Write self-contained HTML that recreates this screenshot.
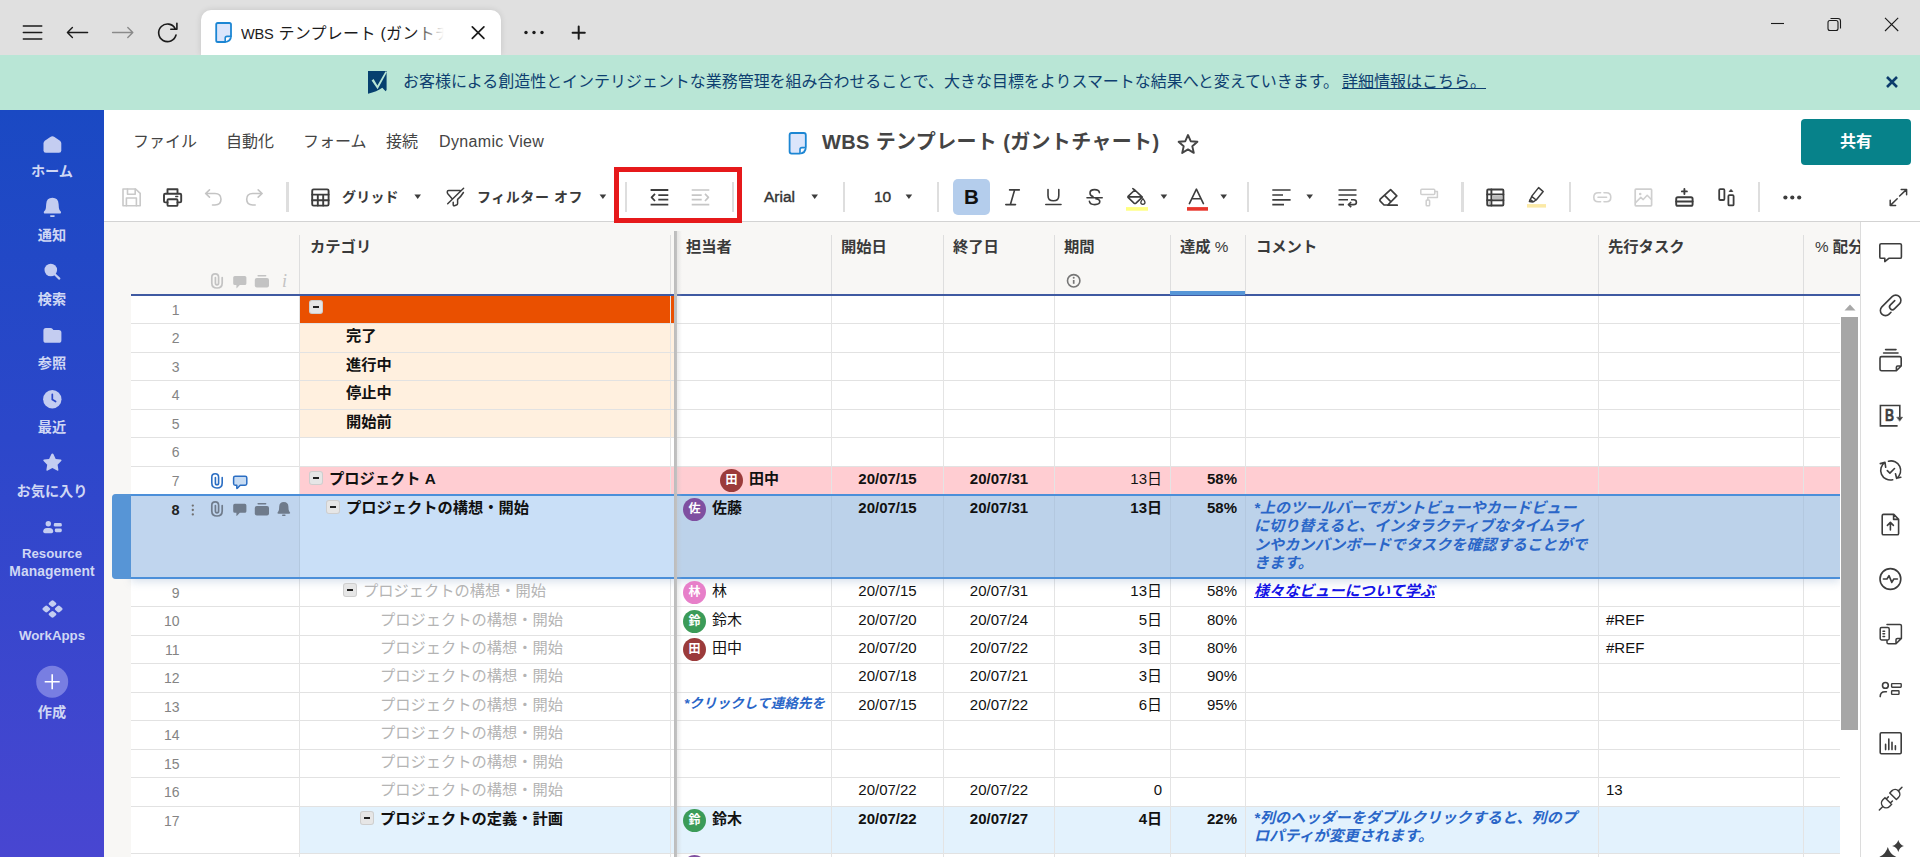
<!DOCTYPE html><html lang="ja"><head><meta charset="utf-8"><title>WBS</title><style>
*{box-sizing:border-box;margin:0;padding:0}
html,body{width:1920px;height:857px;overflow:hidden;background:#fff}
body{position:relative;font-family:"Liberation Sans","Noto Sans CJK JP",sans-serif;color:#222;font-size:14px}
.abs{position:absolute}
#chrome{left:0;top:0;width:1920px;height:55px;background:#e0e0e0}
#tab{left:201px;top:10px;width:300px;height:45px;background:#fff;border-radius:10px 10px 0 0;box-shadow:0 0 6px rgba(0,0,0,.12)}
#banner{left:0;top:55px;width:1920px;height:55px;background:#b9e6d6}
#side{left:0;top:110px;width:104px;height:747px;background:linear-gradient(180deg,#1a49c3 0%,#2c47ca 44%,#4846d1 100%)}
.sl{position:absolute;left:0;width:104px;text-align:center;color:#cfd7f4;font-weight:bold;font-size:14.2px;line-height:18px;white-space:nowrap}
.menu{position:absolute;top:132px;font-size:16px;line-height:20px;color:#444;white-space:nowrap}
.sep{position:absolute;top:182px;width:2px;height:30px;background:#dedede}
#gridbg{left:104px;top:222px;width:1756px;height:635px;background:#f8f7f5}
.hd{position:absolute;top:238px;font-size:15.3px;font-weight:bold;color:#3a3a3a;line-height:18px;white-space:nowrap}
.vl{position:absolute;width:1px;background:#e2e2e2}
.hl{position:absolute;height:1px;background:#e2e2e2;left:131px;width:1709px}
.row{position:absolute;left:300px;width:1540px}
.rn{position:absolute;left:131px;width:48.5px;text-align:right;font-size:14px;color:#848484;line-height:18px}
.c{position:absolute;font-size:15px;line-height:18px;white-space:nowrap;color:#111}
.b{font-weight:bold}
.g{color:#b4b4b4}
.r{text-align:right}
.av{position:absolute;width:23px;height:23px;border-radius:50%;color:#fff;font-size:12px;line-height:23px;text-align:center;font-weight:700}
.cm{position:absolute;font-size:15px;letter-spacing:.12px;line-height:18.35px;color:#2a66c8;font-style:italic;font-weight:bold;white-space:nowrap}
.tg{position:absolute;width:14px;height:14px;border-radius:3px;background:#e6e6e6;box-shadow:inset 0 0 0 1px rgba(0,0,0,.1)}
.tg:after{content:"";position:absolute;left:4px;top:6px;width:6px;height:2px;background:#222}
</style></head><body><div id="chrome" class="abs"></div>
<div id="tab" class="abs"></div>
<div id="banner" class="abs"></div>
<div id="side" class="abs"></div>
<div id="gridbg" class="abs"></div>
<svg class="abs" style="left:0;top:0" width="620" height="55" viewBox="0 0 620 55" fill="none" stroke="#1b1b1b" stroke-width="1.6" stroke-linecap="round" stroke-linejoin="round">
<path d="M23.3 26H41.8M23.3 32.5H41.8M23.3 39H41.8" stroke-width="1.4"/>
<path d="M67.6 32.5H87.6M72.4 27.5L67.4 32.5L72.4 37.5" stroke-width="1.4"/>
<path d="M112.6 32.5H132.6M127.8 27.5L132.8 32.5L127.8 37.5" stroke="#8a8a8a" stroke-width="1.4"/>
<path d="M176 35A8.8 8.8 0 1 1 175.2 28.6M176.9 23.2V29.3H170.8" stroke-width="1.6"/>
<path d="M472.3 26.8L483.9 38.4M483.9 26.8L472.3 38.4" stroke-width="1.7"/>
<path d="M572.6 32.7H584.8M578.7 26.6V38.8" stroke-width="2"/>
<g fill="#1b1b1b" stroke="none"><circle cx="526" cy="32.5" r="1.7"/><circle cx="534" cy="32.5" r="1.7"/><circle cx="542" cy="32.5" r="1.7"/></g>
<path d="M217.8 23H229.4Q231 23 231 24.6V35.6Q231 42 224.6 42H217.8Q216.2 42 216.2 40.4V24.6Q216.2 23 217.8 23Z" fill="#dbe5fb" stroke="#1c86d3" stroke-width="1.8"/>
<path d="M231 36.4H227Q225.2 36.4 225.2 38.2V42" fill="#fff" stroke="#1c86d3" stroke-width="1.6"/>
</svg>
<div class="abs" style="left:241px;top:22px;width:206px;height:24px;overflow:hidden;white-space:nowrap;font-size:16px;line-height:24px;color:#1b1b1b;letter-spacing:.3px"><span style="font-size:14.6px;letter-spacing:-.2px">WBS</span> テンプレート (ガントチャート)</div>
<div class="abs" style="left:415px;top:22px;width:34px;height:24px;background:linear-gradient(90deg,rgba(255,255,255,0),#fff 85%)"></div>
<svg class="abs" style="left:1760px;top:10px" width="150" height="30" viewBox="1760 10 150 30" fill="none" stroke="#1b1b1b" stroke-width="1.1">
<path d="M1771 23.5H1784"/>
<rect x="1828" y="20.5" width="10" height="10" rx="2"/><path d="M1830.5 18.5H1838Q1840.5 18.5 1840.5 21V28.5"/>
<path d="M1885 17.8L1898.2 31M1898.2 17.8L1885 31"/>
</svg>
<svg class="abs" style="left:366px;top:70px" width="24" height="26" viewBox="366 70 24 26"><path d="M368 71H386.6V90L385.6 91.2L382.3 87.8Q377 91.6 368 93.8Z" fill="#06406f"/><path d="M371.6 80.6L373.6 79L377.4 85.4L385.6 71.2L386.9 72.2L377.6 89.3Z" fill="#b9e6d6"/></svg>
<div class="abs" style="left:403px;top:70px;font-size:16px;line-height:24px;color:#0e3f70;white-space:nowrap;letter-spacing:-.04px">お客様による創造性とインテリジェントな業務管理を組み合わせることで、大きな目標をよりスマートな結果へと変えていきます。</div>
<div class="abs" style="left:1342px;top:70px;font-size:16px;line-height:24px;color:#0e3f70;white-space:nowrap;text-decoration:underline">詳細情報はこちら。</div>
<svg class="abs" style="left:1884px;top:74px" width="16" height="16" viewBox="0 0 16 16"><path d="M3 3L13 13M13 3L3 13" stroke="#0c3c6c" stroke-width="2.6" fill="none"/></svg>
<svg class="abs" style="left:0;top:110px" width="104" height="747" viewBox="0 110 104 747" fill="#c4cdf1">
<path d="M43.5 150.5V143.5Q43.5 141.8 44.8 140.8L50.3 136.9Q52.4 135.5 54.5 136.9L60 140.8Q61.3 141.8 61.3 143.5V150.5Q61.3 152.8 59 152.8H45.8Q43.5 152.8 43.5 150.5Z"/>
<path d="M52.4 197.8Q58.3 197.8 58.6 204L58.9 208Q59.2 210.3 60.8 211.6Q61.6 213.6 59.6 213.6H45.2Q43.2 213.6 44 211.6Q45.6 210.3 45.9 208L46.2 204Q46.5 197.8 52.4 197.8Z"/><rect x="50" y="215.2" width="4.8" height="1.7" rx=".8"/>
<circle cx="50.8" cy="270" r="6.3"/><path d="M54.5 274L59.3 278.6" stroke="#c4cdf1" stroke-width="2.2" stroke-linecap="round"/>
<path d="M43.4 330.5Q43.4 328 45.9 328H50.5Q51.8 328 52.6 329L53.4 330H58.8Q61.4 330 61.4 332.6V340.2Q61.4 342.8 58.8 342.8H46Q43.4 342.8 43.4 340.2Z"/>
<circle cx="52.3" cy="399.3" r="9.2"/><path d="M52.3 394.3V399.6L55.6 401.6" stroke="#2a47c9" stroke-width="1.7" fill="none" stroke-linecap="round"/>
<path d="M52.4 453.5Q53.1 453.5 53.5 454.3L55.7 458.9L60.7 459.6Q62.3 459.9 61.2 461.1L57.6 464.7L58.4 469.7Q58.6 471.3 57.1 470.6L52.4 468.1L47.7 470.6Q46.2 471.3 46.4 469.7L47.2 464.7L43.6 461.1Q42.5 459.9 44.1 459.6L49.1 458.9L51.3 454.3Q51.7 453.5 52.4 453.5Z"/>
<circle cx="48.3" cy="523.8" r="2.7"/><path d="M43.2 531.6Q43.2 527.9 47 527.9H49.4Q53.2 527.9 53.2 531.6Q53.2 533.3 51.5 533.3H44.9Q43.2 533.3 43.2 531.6Z"/><rect x="53.8" y="523" width="8" height="3.6" rx="1.4"/><rect x="54.8" y="528.6" width="7" height="3.6" rx="1.4"/>
<g transform="translate(52.5 609) scale(1 .86)"><rect x="-3.2" y="-9.4" width="6.4" height="6.4" rx="1.6" transform="rotate(45 0 -6.2)"/><rect x="-3.2" y="3" width="6.4" height="6.4" rx="1.6" transform="rotate(45 0 6.2)"/><rect x="-9.4" y="-3.2" width="6.4" height="6.4" rx="1.6" transform="rotate(45 -6.2 0)"/><rect x="3" y="-3.2" width="6.4" height="6.4" rx="1.6" transform="rotate(45 6.2 0)"/></g>
<circle cx="52.2" cy="681.8" r="16" fill="#787ee2"/><path d="M44.7 681.8H59.7M52.2 674.3V689.3" stroke="#fff" stroke-width="1.6" fill="none"/>
</svg>
<div class="sl" style="top:162px">ホーム</div>
<div class="sl" style="top:226px">通知</div>
<div class="sl" style="top:290px">検索</div>
<div class="sl" style="top:354px">参照</div>
<div class="sl" style="top:418px">最近</div>
<div class="sl" style="top:482px">お気に入り</div>
<div class="sl" style="top:703px">作成</div>
<div class="sl" style="top:545px;font-size:13.2px;letter-spacing:0">Resource</div>
<div class="sl" style="top:563px;font-size:13.8px;letter-spacing:.1px">Management</div>
<div class="sl" style="top:627px;font-size:13.3px;letter-spacing:0">WorkApps</div>
<div class="menu" style="left:133px">ファイル</div>
<div class="menu" style="left:226px">自動化</div>
<div class="menu" style="left:303px">フォーム</div>
<div class="menu" style="left:386px">接続</div>
<div class="menu" style="left:439px;letter-spacing:.35px">Dynamic View</div>
<svg class="abs" style="left:786px;top:130px" width="24" height="28" viewBox="786 130 24 28" fill="none"><path d="M791.6 133H803.8Q805.8 133 805.8 135V147Q805.8 153.6 799.2 153.6H791.6Q789.6 153.6 789.6 151.6V135Q789.6 133 791.6 133Z" fill="#dbe5fb" stroke="#1c86d3" stroke-width="1.8"/><path d="M805.8 147.6H802Q800 147.6 800 149.6V153.6" fill="#fff" stroke="#1c86d3" stroke-width="1.6"/></svg>
<div class="abs" style="left:822px;top:127px;font-size:20px;line-height:30px;font-weight:bold;color:#444;white-space:nowrap;letter-spacing:.36px">WBS テンプレート (ガントチャート)</div>
<svg class="abs" style="left:1176px;top:132px" width="24" height="24" viewBox="1176 132 24 24"><path d="M1188 135L1190.7 141.2L1197.4 141.8L1192.3 146.3L1193.8 152.9L1188 149.4L1182.2 152.9L1183.7 146.3L1178.6 141.8L1185.3 141.2Z" fill="none" stroke="#444" stroke-width="1.9" stroke-linejoin="round"/></svg>
<div class="abs" style="left:1801px;top:119px;width:110px;height:46px;border-radius:4px;background:#07828a;color:#fff;font-weight:bold;font-size:16px;line-height:46px;text-align:center">共有</div>
<div class="abs" style="left:104px;top:221px;width:1816px;height:1px;background:#d3d3d3"></div>
<div class="sep" style="left:286px;width:3px"></div>
<div class="sep" style="left:625px;width:2px"></div>
<div class="sep" style="left:732px;width:2px"></div>
<div class="sep" style="left:843px;width:2px"></div>
<div class="sep" style="left:937px;width:2px"></div>
<div class="sep" style="left:1247px;width:2px"></div>
<div class="sep" style="left:1461px;width:3px"></div>
<div class="sep" style="left:1569px;width:2px"></div>
<div class="sep" style="left:1758px;width:2px"></div>
<div class="abs" style="left:953px;top:179px;width:37px;height:36px;border-radius:5px;background:#b4cdec"></div>
<div class="abs" style="left:614px;top:167px;width:128px;height:56px;border:5px solid #e6191b"></div>
<svg class="abs" style="left:104px;top:176px" width="1816" height="44" viewBox="104 176 1816 44" fill="none" stroke="#3d3d3d" stroke-width="1.7" stroke-linejoin="round" stroke-linecap="round">
<g stroke="#c9c9c9" stroke-width="1.6"><path d="M123 189H135.6L140.2 193.3V205.7H123Z"/><path d="M127.5 189V194.3H135.2V189M126.4 205.7V198H136.4V205.7"/></g>
<g stroke-width="1.9"><path d="M167.5 193.7V189.2H177.5V193.7M167.5 202.4H165.2Q164 202.4 164 201.2V194.9Q164 193.7 165.2 193.7H180Q181.2 193.7 181.2 194.9V201.2Q181.2 202.4 180 202.4H177.5"/><rect x="167.5" y="199.2" width="10" height="6.7" rx="1"/><path d="M175.7 196.5H177.8" stroke-width="1.3"/></g>
<g stroke="#c4c4c4" stroke-width="1.6"><path d="M209.5 189.8L205.6 193.5L209.5 197.2M206 193.5H215Q221 193.5 221 199.3Q221 205 215 205H212.5"/><path d="M258.2 189.8L262.1 193.5L258.2 197.2M261.7 193.5H252.7Q246.7 193.5 246.7 199.3Q246.7 205 252.7 205H255.2"/></g>
<g stroke-width="1.9"><rect x="312.2" y="189.4" width="16.4" height="16.2" rx="1.4"/><path d="M312.2 194.6H328.6M312.2 200.2H328.6M317.8 194.6V205.6M323.2 194.6V205.6"/></g>
<g stroke-width="1.5"><path d="M460.2 190.5H448.6Q447.3 190.5 447.3 191.8V192.6Q447.3 193.2 447.8 193.8L452.1 198.7M447.7 203.7L463.6 188.3M463.4 192.5Q461 196.6 457.6 199.4V203.4Q457.6 204.6 456.4 205L454.4 205.7Q453.2 206 453.2 204.8V202.2"/></g>
<g stroke-width="1.8" stroke-linecap="butt"><path d="M650.6 190H668.3M650.6 204.6H668.3M658.3 195.2H668.3M658.3 199.7H668.3M655 193.8L651.6 197.4L655 201"/></g>
<g stroke="#c6c6c6" stroke-width="1.7" stroke-linecap="butt"><path d="M691.7 190H709.3M691.7 204.6H709.3M691.7 195.2H701.7M691.7 199.7H701.7M705 193.8L708.4 197.4L705 201"/></g>
<g stroke-width="1.6"><path d="M1009.6 189.9H1019.3M1005.8 204.6H1015.5M1014.6 190L1010.4 204.5"/></g>
<g stroke-width="1.6"><path d="M1048 189.6V195.4Q1048 200.8 1053.4 200.8Q1058.8 200.8 1058.8 195.4V189.6M1045.8 204.5H1061"/></g>
<g stroke-width="1.6"><path d="M1099.4 192.6Q1099 189.6 1094.6 189.6Q1090 189.6 1090 193Q1090 195.6 1093 196.6M1096 198.8Q1099.8 199.6 1099.8 201.6Q1099.8 204.6 1094.8 204.6Q1090 204.6 1089.4 201.4M1087 197.7H1102.2"/></g>
<g stroke-width="1.6"><path d="M1134.8 190L1142.3 197.1L1136 203.1Q1135 203.9 1134 203.1L1128.3 197.7Q1127.5 196.9 1128.3 196.1L1134.8 190ZM1132.8 188.6L1134.8 190M1128.2 196.9H1141.8"/><path d="M1142.9 198.6Q1145 201.2 1145 202.5Q1145 204.3 1142.9 204.3Q1140.8 204.3 1140.8 202.5Q1140.8 201.2 1142.9 198.6Z" stroke-width="1.3"/></g>
<g stroke-width="1.6"><path d="M1189.4 203.6L1196.4 189.2L1203.4 203.6M1191.8 198.8H1201"/></g>
<g stroke-width="1.7" stroke-linecap="butt"><path d="M1272.3 190H1290.6M1272.3 195H1283M1272.3 199.8H1290.6M1272.3 204.6H1284"/></g>
<g stroke-width="1.6" stroke-linecap="butt"><path d="M1338.5 190H1356.5M1338.5 195H1356.5M1338.5 199.8H1348M1338.5 204.6H1344M1351 199.8H1353.6Q1356.4 199.8 1356.4 202.2Q1356.4 204.6 1353.6 204.6H1349"/><path d="M1351.2 202L1348.4 204.6L1351.2 207.2"/></g>
<g stroke-width="1.7"><path d="M1390.6 189.6L1396.8 195.8L1387.8 205H1384L1380.2 201.2Q1379.4 200.2 1380.2 199.2ZM1384.6 195.4L1391 201.8M1387.8 205.2H1397.2"/></g>
<g stroke="#cfcfcf" stroke-width="1.5"><rect x="1420.8" y="189.2" width="14" height="5.2" rx="1"/><path d="M1434.8 191.6H1437.4V197.4H1427.8V200"/><rect x="1426.2" y="200" width="3.4" height="5.8" rx=".8"/></g>
<g stroke-width="1.9"><rect x="1487.2" y="189.5" width="16.2" height="16" rx="1"/><path d="M1487.2 194.4H1503.4M1487.2 200.3H1503.4M1491.4 189.5V205.5"/><path d="M1492.6 195.6H1502.2V199.2H1492.6ZM1488.4 201.4H1490.4V204.4H1488.4Z" fill="#bdbdbd" stroke="none"/></g>
<g stroke-width="1.5"><path d="M1538.6 187.6L1543.2 191.6L1536.2 200L1531.6 196.4ZM1531.8 196.6L1530.2 199.6L1533.4 201.8L1536 200M1530 199.6L1529.4 201.6L1532.6 201.9"/></g>
<g stroke="#cfcfcf" stroke-width="1.6"><path d="M1600.6 192.8H1598.2Q1593.8 192.8 1593.8 197.3Q1593.8 201.8 1598.2 201.8H1600.6M1604 192.8H1606.4Q1610.8 192.8 1610.8 197.3Q1610.8 201.8 1606.4 201.8H1604M1598 197.3H1606.6"/><rect x="1635.2" y="189.2" width="16.4" height="16.6" rx=".8" stroke-width="1.7"/><path d="M1635.6 202.6L1640.8 197.4L1643.2 199.6L1647.2 195.2L1651.4 199.6" stroke-width="1.5"/><circle cx="1640.2" cy="194" r=".7" stroke-width="1.2"/></g>
<g stroke-width="1.9"><rect x="1676.2" y="197.2" width="16.4" height="8.6" rx="1.6"/><path d="M1676.2 201.5H1692.6M1684.4 188.9V194M1681.9 191.4H1686.9"/></g>
<g stroke-width="1.8"><rect x="1719.2" y="189.2" width="5.2" height="10.8" rx="1"/><rect x="1728.4" y="195.2" width="5.2" height="10.2" rx="1"/><path d="M1729.5 191.2L1731 189.5L1732.5 191.2Z" fill="#3d3d3d" stroke-width="1"/></g>
<g stroke-width="1.5"><path d="M1899.6 196L1906.4 189.6M1901.2 189.4H1906.6V194.8M1897.2 198.8L1890.4 205.4M1890.2 200.2V205.6H1895.6"/></g>
<g fill="#3d3d3d" stroke="none"><circle cx="1785.4" cy="197.5" r="2.1"/><circle cx="1792.3" cy="197.5" r="2.1"/><circle cx="1799.2" cy="197.5" r="2.1"/>
<path d="M414.4 194.4H421L417.7 199Z"/><path d="M599.6 194.4H606.2L602.9 199Z"/><path d="M811.4 194.4H818L814.7 199Z"/><path d="M905.6 194.4H912.2L908.9 199Z"/><path d="M1160.6 194.4H1167.2L1163.9 199Z"/><path d="M1220.4 194.4H1227L1223.7 199Z"/><path d="M1306.4 194.4H1313L1309.7 199Z"/></g>
<rect x="1126" y="207.1" width="22" height="3.6" fill="#ffff80" stroke="none"/><rect x="1187" y="207.1" width="21" height="3.6" fill="#e8352b" stroke="none"/><rect x="1527" y="204.1" width="19" height="3.5" fill="#fbe9a6" stroke="none"/>
</svg>
<div class="abs b" style="left:342px;top:187px;font-size:14px;line-height:20px;color:#3a3a3a;white-space:nowrap;letter-spacing:.2px">グリッド</div>
<div class="abs b" style="left:477px;top:187px;font-size:14px;line-height:20px;color:#3a3a3a;white-space:nowrap;letter-spacing:.55px">フィルター オフ</div>
<div class="abs" style="left:764px;top:187px;font-size:15.5px;line-height:20px;color:#333;-webkit-text-stroke:.4px #333;white-space:nowrap">Arial</div>
<div class="abs" style="left:874px;top:187px;font-size:15.5px;line-height:20px;color:#333;-webkit-text-stroke:.4px #333;white-space:nowrap">10</div>
<div class="abs b" style="left:953px;top:185px;width:37px;text-align:center;font-size:20.5px;line-height:24px;color:#111">B</div>
<div class="abs" style="left:131px;top:296px;width:1729px;height:561px;background:#fff"></div>
<div class="abs" style="left:300px;top:296px;width:374px;height:27px;background:#ea5000"></div>
<div class="abs" style="left:300px;top:324px;width:374px;height:28px;background:#fff0df"></div>
<div class="abs" style="left:300px;top:353px;width:374px;height:27px;background:#fff0df"></div>
<div class="abs" style="left:300px;top:381px;width:374px;height:28px;background:#fff0df"></div>
<div class="abs" style="left:300px;top:410px;width:374px;height:27px;background:#fff0df"></div>
<div class="abs" style="left:300px;top:467px;width:1540px;height:27px;background:#ffcdd2"></div>
<div class="abs" style="left:300px;top:807px;width:1540px;height:46px;background:#e3f2fd"></div>
<div class="hl" style="top:323px"></div>
<div class="hl" style="top:352px"></div>
<div class="hl" style="top:380px"></div>
<div class="hl" style="top:409px"></div>
<div class="hl" style="top:437px"></div>
<div class="hl" style="top:466px"></div>
<div class="hl" style="top:606px"></div>
<div class="hl" style="top:635px"></div>
<div class="hl" style="top:663px"></div>
<div class="hl" style="top:692px"></div>
<div class="hl" style="top:720px"></div>
<div class="hl" style="top:749px"></div>
<div class="hl" style="top:777px"></div>
<div class="hl" style="top:806px"></div>
<div class="hl" style="top:853px"></div>
<div class="vl" style="left:299px;top:296px;height:561px;background:#e4e4e4"></div>
<div class="vl" style="left:670px;top:296px;height:561px;background:#e4e4e4"></div>
<div class="vl" style="left:831px;top:296px;height:561px;background:#e4e4e4"></div>
<div class="vl" style="left:943px;top:296px;height:561px;background:#e4e4e4"></div>
<div class="vl" style="left:1054px;top:296px;height:561px;background:#e4e4e4"></div>
<div class="vl" style="left:1170px;top:296px;height:561px;background:#e4e4e4"></div>
<div class="vl" style="left:1245px;top:296px;height:561px;background:#e4e4e4"></div>
<div class="vl" style="left:1598px;top:296px;height:561px;background:#e4e4e4"></div>
<div class="vl" style="left:1803px;top:296px;height:561px;background:#e4e4e4"></div>
<div class="abs" style="left:131px;top:500px;width:1709px;height:79px;box-shadow:0 3px 8px rgba(120,150,190,.28)"></div>
<div class="abs" style="left:112px;top:494px;width:1728px;height:85px;background:#bcd2ea;border-radius:4px 0 0 4px"></div>
<div class="abs" style="left:131px;top:496px;width:168px;height:81px;background:#c0d5ee"></div>
<div class="abs" style="left:300px;top:496px;width:374px;height:81px;background:#c9dff7"></div>
<div class="abs" style="left:112px;top:494px;width:19px;height:85px;background:#5795d6;border-radius:4px 0 0 4px"></div>
<div class="abs" style="left:131px;top:494px;width:1709px;height:2px;background:#4b8fd9"></div>
<div class="abs" style="left:131px;top:577px;width:1709px;height:2px;background:#4b8fd9"></div>
<div class="vl" style="left:299px;top:496px;height:81px;background:rgba(0,0,0,.045)"></div>
<div class="vl" style="left:831px;top:496px;height:81px;background:rgba(0,0,0,.045)"></div>
<div class="vl" style="left:943px;top:496px;height:81px;background:rgba(0,0,0,.045)"></div>
<div class="vl" style="left:1054px;top:496px;height:81px;background:rgba(0,0,0,.045)"></div>
<div class="vl" style="left:1170px;top:496px;height:81px;background:rgba(0,0,0,.045)"></div>
<div class="vl" style="left:1245px;top:496px;height:81px;background:rgba(0,0,0,.045)"></div>
<div class="vl" style="left:1598px;top:496px;height:81px;background:rgba(0,0,0,.045)"></div>
<div class="vl" style="left:1803px;top:496px;height:81px;background:rgba(0,0,0,.045)"></div>
<div class="vl" style="left:299px;top:235px;height:59px;background:#dedede"></div>
<div class="vl" style="left:670px;top:235px;height:59px;background:#dedede"></div>
<div class="vl" style="left:831px;top:235px;height:59px;background:#dedede"></div>
<div class="vl" style="left:943px;top:235px;height:59px;background:#dedede"></div>
<div class="vl" style="left:1054px;top:235px;height:59px;background:#dedede"></div>
<div class="vl" style="left:1170px;top:235px;height:59px;background:#dedede"></div>
<div class="vl" style="left:1245px;top:235px;height:59px;background:#dedede"></div>
<div class="vl" style="left:1598px;top:235px;height:59px;background:#dedede"></div>
<div class="vl" style="left:1803px;top:235px;height:59px;background:#dedede"></div>
<div class="abs" style="left:131px;top:294px;width:1729px;height:2px;background:#3f5aa2"></div>
<div class="abs" style="left:1170px;top:291px;width:75px;height:4px;background:#5796d7"></div>
<div class="abs" style="left:674px;top:231px;width:8px;height:626px;background:linear-gradient(90deg,#bcbcbc 0,#c2c2c2 3px,rgba(190,190,190,.3) 3px,rgba(220,220,220,0) 8px)"></div>
<div class="hd" style="left:310px">カテゴリ</div>
<div class="hd" style="left:686px">担当者</div>
<div class="hd" style="left:841px">開始日</div>
<div class="hd" style="left:953px">終了日</div>
<div class="hd" style="left:1064px">期間</div>
<div class="hd" style="left:1180px">達成 <span style="font-weight:normal">%</span></div>
<div class="hd" style="left:1256px">コメント</div>
<div class="hd" style="left:1608px">先行タスク</div>
<div class="hd" style="left:1815px"><span style="font-weight:normal">%</span> 配分</div>
<div class="rn" style="top:301px">1</div>
<div class="rn" style="top:329px">2</div>
<div class="rn" style="top:358px">3</div>
<div class="rn" style="top:386px">4</div>
<div class="rn" style="top:415px">5</div>
<div class="rn" style="top:443px">6</div>
<div class="rn" style="top:472px">7</div>
<div class="rn b" style="top:501px;color:#222;font-size:14.5px">8</div>
<div class="rn" style="top:584px">9</div>
<div class="rn" style="top:612px">10</div>
<div class="rn" style="top:641px">11</div>
<div class="rn" style="top:669px">12</div>
<div class="rn" style="top:698px">13</div>
<div class="rn" style="top:726px">14</div>
<div class="rn" style="top:755px">15</div>
<div class="rn" style="top:783px">16</div>
<div class="rn" style="top:812px">17</div>
<div class="tg" style="left:309px;top:300px"></div>
<div class="c b" style="left:346px;top:327px;font-size:15.25px">完了</div>
<div class="c b" style="left:346px;top:356px;font-size:15.25px">進行中</div>
<div class="c b" style="left:346px;top:384px;font-size:15.25px">停止中</div>
<div class="c b" style="left:346px;top:413px;font-size:15.25px">開始前</div>
<div class="tg" style="left:309px;top:471px"></div>
<div class="c b" style="left:329px;top:470px;font-size:15.25px">プロジェクト A</div>
<div class="tg" style="left:326px;top:500px"></div>
<div class="c b" style="left:346px;top:499px;font-size:15.25px">プロジェクトの構想・開始</div>
<div class="tg" style="left:343px;top:583px"></div>
<div class="c g" style="left:363px;top:582px;font-size:15.25px">プロジェクトの構想・開始</div>
<div class="c g" style="left:380px;top:611px;font-size:15.25px">プロジェクトの構想・開始</div>
<div class="c g" style="left:380px;top:639px;font-size:15.25px">プロジェクトの構想・開始</div>
<div class="c g" style="left:380px;top:667px;font-size:15.25px">プロジェクトの構想・開始</div>
<div class="c g" style="left:380px;top:696px;font-size:15.25px">プロジェクトの構想・開始</div>
<div class="c g" style="left:380px;top:724px;font-size:15.25px">プロジェクトの構想・開始</div>
<div class="c g" style="left:380px;top:753px;font-size:15.25px">プロジェクトの構想・開始</div>
<div class="c g" style="left:380px;top:781px;font-size:15.25px">プロジェクトの構想・開始</div>
<div class="tg" style="left:360px;top:811px"></div>
<div class="c b" style="left:380px;top:810px;font-size:15.25px">プロジェクトの定義・計画</div>
<div class="av" style="left:720px;top:469px;background:#9b3b3b">田</div>
<div class="c b" style="left:749px;top:470px">田中</div>
<div class="av" style="left:683px;top:498px;background:#7f4fa0">佐</div>
<div class="c b" style="left:712px;top:499px">佐藤</div>
<div class="av" style="left:683px;top:581px;background:#e77fc9">林</div>
<div class="c " style="left:712px;top:582px">林</div>
<div class="av" style="left:683px;top:610px;background:#3b9b58">鈴</div>
<div class="c " style="left:712px;top:611px">鈴木</div>
<div class="av" style="left:683px;top:638px;background:#9b3b3b">田</div>
<div class="c " style="left:712px;top:639px">田中</div>
<div class="av" style="left:683px;top:809px;background:#3b9b58">鈴</div>
<div class="c b" style="left:712px;top:810px">鈴木</div>
<div class="av" style="left:683px;top:855px;background:#7f4fa0">佐</div>
<div class="cm" style="left:684px;top:695px;font-size:13.5px;width:146px;overflow:hidden">*クリックして連絡先を</div>
<div class="c b" style="left:832px;width:111px;text-align:center;top:470px">20/07/15</div>
<div class="c b" style="left:944px;width:110px;text-align:center;top:470px">20/07/31</div>
<div class="c r " style="left:1055px;width:107px;top:470px">13日</div>
<div class="c r b" style="left:1171px;width:66px;top:470px">58%</div>
<div class="c b" style="left:832px;width:111px;text-align:center;top:499px">20/07/15</div>
<div class="c b" style="left:944px;width:110px;text-align:center;top:499px">20/07/31</div>
<div class="c r b" style="left:1055px;width:107px;top:499px">13日</div>
<div class="c r b" style="left:1171px;width:66px;top:499px">58%</div>
<div class="c " style="left:832px;width:111px;text-align:center;top:582px">20/07/15</div>
<div class="c " style="left:944px;width:110px;text-align:center;top:582px">20/07/31</div>
<div class="c r " style="left:1055px;width:107px;top:582px">13日</div>
<div class="c r " style="left:1171px;width:66px;top:582px">58%</div>
<div class="c " style="left:832px;width:111px;text-align:center;top:611px">20/07/20</div>
<div class="c " style="left:944px;width:110px;text-align:center;top:611px">20/07/24</div>
<div class="c r " style="left:1055px;width:107px;top:611px">5日</div>
<div class="c r " style="left:1171px;width:66px;top:611px">80%</div>
<div class="c " style="left:832px;width:111px;text-align:center;top:639px">20/07/20</div>
<div class="c " style="left:944px;width:110px;text-align:center;top:639px">20/07/22</div>
<div class="c r " style="left:1055px;width:107px;top:639px">3日</div>
<div class="c r " style="left:1171px;width:66px;top:639px">80%</div>
<div class="c " style="left:832px;width:111px;text-align:center;top:667px">20/07/18</div>
<div class="c " style="left:944px;width:110px;text-align:center;top:667px">20/07/21</div>
<div class="c r " style="left:1055px;width:107px;top:667px">3日</div>
<div class="c r " style="left:1171px;width:66px;top:667px">90%</div>
<div class="c " style="left:832px;width:111px;text-align:center;top:696px">20/07/15</div>
<div class="c " style="left:944px;width:110px;text-align:center;top:696px">20/07/22</div>
<div class="c r " style="left:1055px;width:107px;top:696px">6日</div>
<div class="c r " style="left:1171px;width:66px;top:696px">95%</div>
<div class="c " style="left:832px;width:111px;text-align:center;top:781px">20/07/22</div>
<div class="c " style="left:944px;width:110px;text-align:center;top:781px">20/07/22</div>
<div class="c r " style="left:1055px;width:107px;top:781px">0</div>
<div class="c b" style="left:832px;width:111px;text-align:center;top:810px">20/07/22</div>
<div class="c b" style="left:944px;width:110px;text-align:center;top:810px">20/07/27</div>
<div class="c r b" style="left:1055px;width:107px;top:810px">4日</div>
<div class="c r b" style="left:1171px;width:66px;top:810px">22%</div>
<div class="cm" style="left:1254px;top:499px">*上のツールバーでガントビューやカードビュー<br>に切り替えると、インタラクティブなタイムライ<br>ンやカンバンボードでタスクを確認することがで<br>きます。</div>
<div class="cm" style="left:1254px;top:582px;color:#1414e6;text-decoration:underline">様々なビューについて学ぶ</div>
<div class="cm" style="left:1254px;top:809px">*列のヘッダーをダブルクリックすると、列のプ<br>ロパティが変更されます。</div>
<div class="c" style="left:1606px;top:611px">#REF</div>
<div class="c" style="left:1606px;top:639px">#REF</div>
<div class="c" style="left:1606px;top:781px">13</div>
<div class="abs" style="left:1840px;top:296px;width:20px;height:561px;background:#fff"></div>
<div class="abs" style="left:1841px;top:317px;width:17px;height:413px;background:#a6a6a6"></div>
<svg class="abs" style="left:1843px;top:303px" width="14" height="9" viewBox="0 0 14 9"><path d="M1.5 7.5L7 1.5L12.5 7.5Z" fill="#a8a8a8"/></svg>
<div class="abs" style="left:1860px;top:222px;width:60px;height:635px;background:#fff;border-left:1px solid #dcdcdc"></div>
<svg class="abs" style="left:200px;top:268px" width="100" height="255" viewBox="200 268 100 255"><g transform="translate(210.6 273)" fill="none" stroke="#c3c3c3" stroke-width="1.7" stroke-linecap="round"><path d="M11.6 4.6V10Q11.6 15 6.4 15Q1.2 15 1.2 10V4.2Q1.2 0.8 4.6 0.8Q8 0.8 8 4.2V10Q8 11.8 6.4 11.8Q4.8 11.8 4.8 10V4.6"/></g><path transform="translate(232.8 275.4)" d="M2 0.6H12Q13.6 0.6 13.6 2.2V8Q13.6 9.6 12 9.6H7L4.2 12.6Q3.6 13.2 3.6 12.4V9.6H2Q0.4 9.6 0.4 8V2.2Q0.4 0.6 2 0.6Z" fill="#c3c3c3" stroke-linejoin="round"/><g transform="translate(254.8 275)" fill="#c3c3c3"><rect x="2.6" y="0" width="9" height="1.6" rx=".8"/><path d="M2 3H12.2Q14.2 3 14.2 5V10.6Q14.2 12.6 12.2 12.6H2Q0 12.6 0 10.6V5Q0 3 2 3Z"/></g><g transform="translate(210.6 473)" fill="none" stroke="#2b6ec3" stroke-width="1.6" stroke-linecap="round"><path d="M11.6 4.6V10Q11.6 15 6.4 15Q1.2 15 1.2 10V4.2Q1.2 0.8 4.6 0.8Q8 0.8 8 4.2V10Q8 11.8 6.4 11.8Q4.8 11.8 4.8 10V4.6"/></g><path transform="translate(233.2 475.6)" d="M2 0.6H12Q13.6 0.6 13.6 2.2V8Q13.6 9.6 12 9.6H7L4.2 12.6Q3.6 13.2 3.6 12.4V9.6H2Q0.4 9.6 0.4 8V2.2Q0.4 0.6 2 0.6Z" fill="#c8dcf3" stroke="#2b6ec3" stroke-width="1.5" stroke-linejoin="round"/><g transform="translate(210.6 501)" fill="none" stroke="#6f7b8b" stroke-width="1.7" stroke-linecap="round"><path d="M11.6 4.6V10Q11.6 15 6.4 15Q1.2 15 1.2 10V4.2Q1.2 0.8 4.6 0.8Q8 0.8 8 4.2V10Q8 11.8 6.4 11.8Q4.8 11.8 4.8 10V4.6"/></g><path transform="translate(232.8 503.2)" d="M2 0.6H12Q13.6 0.6 13.6 2.2V8Q13.6 9.6 12 9.6H7L4.2 12.6Q3.6 13.2 3.6 12.4V9.6H2Q0.4 9.6 0.4 8V2.2Q0.4 0.6 2 0.6Z" fill="#6f7b8b" stroke-linejoin="round"/><g transform="translate(254.8 503)" fill="#6f7b8b"><rect x="2.6" y="0" width="9" height="1.6" rx=".8"/><path d="M2 3H12.2Q14.2 3 14.2 5V10.6Q14.2 12.6 12.2 12.6H2Q0 12.6 0 10.6V5Q0 3 2 3Z"/></g><g transform="translate(277.2 502)" fill="#6f7b8b"><path d="M6.6 0Q11 0 11.2 4.6L11.4 7.6Q11.6 9.4 12.8 10.4Q13.4 11.8 11.8 11.8H1.4Q-0.2 11.8 0.4 10.4Q1.6 9.4 1.8 7.6L2 4.6Q2.2 0 6.6 0Z"/><rect x="4.8" y="12.6" width="3.6" height="1.4" rx=".7"/></g><g fill="#7a7a7a"><circle cx="192.8" cy="506" r="1.2"/><circle cx="192.8" cy="510.3" r="1.2"/><circle cx="192.8" cy="514.6" r="1.2"/></g></svg>
<svg class="abs" style="left:188px;top:502px" width="10" height="16" viewBox="188 502 10 16"><g fill="#6f6f6f"><circle cx="192.8" cy="505.6" r="1.15"/><circle cx="192.8" cy="510" r="1.15"/><circle cx="192.8" cy="514.4" r="1.15"/></g></svg>
<div class="abs" style="left:282px;top:271px;font-family:'Liberation Serif',serif;font-style:italic;font-size:18px;line-height:20px;color:#c3c3c3">i</div>
<svg class="abs" style="left:1065px;top:272px" width="18" height="18" viewBox="0 0 18 18"><circle cx="8.7" cy="8.8" r="6.2" fill="none" stroke="#777" stroke-width="1.6"/><path d="M8.7 8V11.8" stroke="#777" stroke-width="1.7"/><circle cx="8.7" cy="5.8" r="1" fill="#777"/></svg>
<svg class="abs" style="left:1861px;top:230px" width="59" height="627" viewBox="1861 230 59 627" fill="none" stroke="#3d3d3d" stroke-width="1.6" stroke-linejoin="round" stroke-linecap="round">
<path d="M1881.2 243.7H1900Q1901.4 243.7 1901.4 245.1V256.9Q1901.4 258.3 1900 258.3H1888.8L1884.8 261.6V258.3H1881.2Q1879.8 258.3 1879.8 256.9V245.1Q1879.8 243.7 1881.2 243.7Z"/>
<path transform="translate(1890.6 305.4) rotate(-45)" d="M-4.6 5.15H-7.2A5.15 5.15 0 0 1 -7.2 -5.15H7.3A5.15 5.15 0 0 1 7.3 5.15H0.2A2.8 2.8 0 0 1 0.2 -0.45H6.3"/>
<path d="M1885.6 349.6H1896M1883.6 353H1898M1881.6 356.6H1899.6Q1901.2 356.6 1901.2 358.2V366L1896.4 370.8H1881.6Q1880 370.8 1880 369.2V358.2Q1880 356.6 1881.6 356.6ZM1901 366H1897.6Q1896.4 366 1896.4 367.2V370.6"/>
<path d="M1899.8 417V405.5H1880.4V425.9H1897.6" stroke-linejoin="miter" stroke-linecap="butt"/><path d="M1897 417.2H1902.6L1899.8 421Z" fill="#3d3d3d" stroke-width=".5"/>
<path d="M1888.5 461.2A9.6 9.6 0 0 1 1896.6 478.3M1895.5 473.8L1896.6 478.3L1900.8 477.3M1892.7 479.7A9.6 9.6 0 0 1 1885 462.4M1880.3 463.6L1885 462.4L1885.7 467.3M1887.3 470.6L1889.9 473.1L1894.5 468.5"/>
<path d="M1883.6 514.4H1893.8L1898.6 519.2V533.4Q1898.6 534.8 1897.2 534.8H1883.6Q1882.2 534.8 1882.2 533.4V515.8Q1882.2 514.4 1883.6 514.4ZM1893.6 514.6V519.4H1898.4M1890.4 530V522.6M1887.4 525.4L1890.4 522.4L1893.4 525.4"/>
<circle cx="1890.4" cy="579" r="10.4"/><path d="M1883.4 579H1887L1889 575.6L1891.8 582.4L1893.8 579H1897.4"/>
<path d="M1887 624.4H1900Q1901.4 624.4 1901.4 625.8V638.4L1896 643.8H1888.4Q1887 643.8 1887 642.4V640M1901.2 638.4H1897.4Q1896 638.4 1896 639.8V643.6M1881.6 627.6H1887.8Q1889.2 627.6 1889.2 629V638.6Q1889.2 640 1887.8 640H1881.6Q1880.2 640 1880.2 638.6V629Q1880.2 627.6 1881.6 627.6ZM1883 631.2H1884.6M1883 633.8H1884.6M1883 636.4H1884.6" stroke-width="1.5"/>
<circle cx="1885.4" cy="685.4" r="2.9"/><path d="M1880.2 696.6Q1880.2 691.8 1885 691.8H1886.4"/><rect x="1891.6" y="683.6" width="9.6" height="3.6" rx=".6" stroke-width="1.4"/><rect x="1891.6" y="690.8" width="7.4" height="3.6" rx=".6" stroke-width="1.4"/>
<rect x="1880.2" y="732.8" width="21" height="21" rx="1.2"/><path d="M1885.6 749.6V744.4M1888.8 749.6V739M1892 749.6V742.2M1895.4 749.6V745.8"/>
<path transform="translate(1890.65 798.65) rotate(-45)" d="M3.4 -4.7V4.7H6.3A4.7 4.7 0 0 0 6.3 -4.7ZM11 0H16M-3.3 -4.7V4.7H-6.3A4.7 4.7 0 0 1 -6.3 -4.7ZM-11 0H-16M-3.3 -2.9H-0.4M-3.3 2.9H-0.4" stroke-width="1.5"/>
<path d="M1898.3 840.1Q1899.6 844.8 1903.9 846.1Q1899.6 847.4 1898.3 851.9Q1897 847.4 1892.1 846.1Q1897 844.8 1898.3 840.1Z" fill="#3d3d3d" stroke="none"/>
<path d="M1887.8 846.9Q1890.2 855.4 1898.6 857.8Q1890.2 860.2 1887.8 868.6Q1885.4 860.2 1877 857.8Q1885.4 855.4 1887.8 846.9Z" fill="#3d3d3d" stroke="none"/>
</svg>
<div class="abs b" style="left:1885px;top:406.5px;font-size:17px;line-height:18px;color:#3d3d3d;font-family:'Liberation Sans',sans-serif;-webkit-text-stroke:.5px #3d3d3d;transform:scaleX(.74);transform-origin:0 0">B</div></body></html>
